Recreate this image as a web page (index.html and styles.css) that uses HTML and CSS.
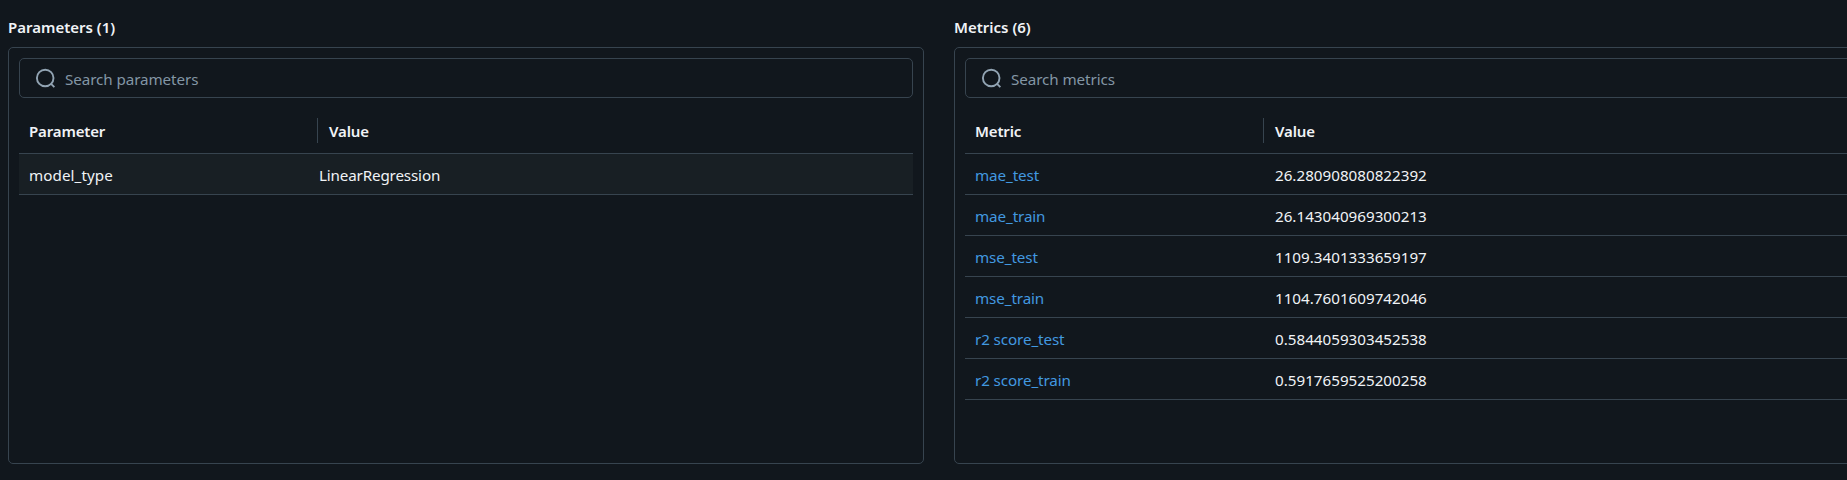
FILE: index.html
```html
<!DOCTYPE html>
<html lang="en">
<head>
<meta charset="utf-8">
<title>Run overview</title>
<link rel="stylesheet" href="styles.css">
</head>
<body>
<main class="overview">
  <section class="section">
    <h2 class="title">Parameters (1)</h2>
    <div class="panel">
      <div class="search">
        <svg class="search-icon" viewBox="0 0 20 20"><circle cx="10.2" cy="10" r="8.3"/><path d="M15.8 15.6l3.6 3.6"/></svg>
        <span class="placeholder">Search parameters</span>
      </div>
      <div class="row head"><div class="cell name">Parameter</div><div class="cell value">Value</div></div>
      <div class="row hovered"><div class="cell name key">model_type</div><div class="cell value flush">LinearRegression</div></div>
    </div>
  </section>
  <section class="section">
    <h2 class="title">Metrics (6)</h2>
    <div class="panel">
      <div class="search">
        <svg class="search-icon" viewBox="0 0 20 20"><circle cx="10.2" cy="10" r="8.3"/><path d="M15.8 15.6l3.6 3.6"/></svg>
        <span class="placeholder">Search metrics</span>
      </div>
      <div class="row head"><div class="cell name">Metric</div><div class="cell value">Value</div></div>
      <div class="row"><div class="cell name"><a class="link">mae_test</a></div><div class="cell value">26.280908080822392</div></div>
      <div class="row"><div class="cell name"><a class="link">mae_train</a></div><div class="cell value">26.143040969300213</div></div>
      <div class="row"><div class="cell name"><a class="link">mse_test</a></div><div class="cell value">1109.3401333659197</div></div>
      <div class="row"><div class="cell name"><a class="link">mse_train</a></div><div class="cell value">1104.7601609742046</div></div>
      <div class="row"><div class="cell name"><a class="link">r2 score_test</a></div><div class="cell value">0.5844059303452538</div></div>
      <div class="row"><div class="cell name"><a class="link">r2 score_train</a></div><div class="cell value">0.5917659525200258</div></div>
    </div>
  </section>
</main>
</body>
</html>
```

FILE: styles.css
```css
* { box-sizing: border-box; }
body {
  margin: 0;
  height: 480px;
  overflow: hidden;
  background: #11171d;
  color: #f0f3f6;
  font: 15.2px/20px "Noto Sans", "Open Sans", sans-serif;
}
.overview {
  display: grid;
  grid-template-columns: 916px 916px;
  column-gap: 30px;
  padding: 17px 0 0 8px;
}
.title {
  margin: 0 0 10px;
  font-size: 15px;
  line-height: 20px;
  font-weight: 600;
}
.panel {
  height: 417px;
  padding: 10px;
  border: 1px solid #37444f;
  border-radius: 5px;
}
.search {
  display: flex;
  align-items: center;
  gap: 10px;
  height: 40px;
  padding-left: 15px;
  border: 1px solid #37444f;
  border-radius: 5px;
}
.search-icon {
  width: 20px;
  height: 20px;
  fill: none;
  stroke: #92a4b3;
  stroke-width: 1.9;
}
.placeholder { color: #8396a5; letter-spacing: -0.08px; padding-top: 2px; }
.row {
  display: flex;
  align-items: center;
  height: 41px;
  border-bottom: 1px solid #37444f;
}
.row.head {
  height: 56px;
  padding-top: 10px;
  font-size: 15px;
  font-weight: 600;
  letter-spacing: -0.15px;
}
.row.hovered { background: #181f24; }
.cell { height: 25px; line-height: 27px; }
.cell.name { width: 299px; padding-left: 10px; }
.cell.key { letter-spacing: 0.08px; }
.cell.value { padding-left: 11px; }
.cell.flush { padding-left: 1px; letter-spacing: -0.15px; }
.head .name { border-right: 1px solid #37444f; }
.link { color: #4299e0; letter-spacing: -0.1px; }
```
